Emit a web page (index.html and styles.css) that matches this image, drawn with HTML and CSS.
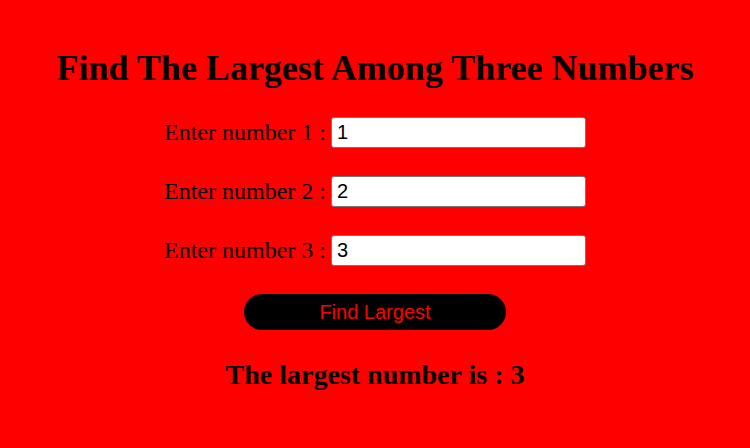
FILE: index.html
```html
<!DOCTYPE html>
<html>
<head>
<meta charset="utf-8">
<link rel="stylesheet" href="styles.css">
</head>
<body>
<div class="page">
  <h1 class="title">Find The Largest Among Three Numbers</h1>
  <div class="row"><label class="label">Enter number 1 :</label><input class="field" type="text" value="1"></div>
  <div class="row"><label class="label">Enter number 2 :</label><input class="field" type="text" value="2"></div>
  <div class="row"><label class="label">Enter number 3 :</label><input class="field" type="text" value="3"></div>
  <button class="btn">Find Largest</button>
  <h2 class="result">The largest number is : 3</h2>
</div>
</body>
</html>
```
FILE: styles.css
```css
html, body {
  margin: 0;
  padding: 0;
  background: #ff0000;
}
body {
  font-family: "Liberation Serif", "Times New Roman", serif;
  color: #000;
}
.page {
  display: flex;
  flex-direction: column;
  align-items: center;
  padding-top: 47px;
}
.title {
  font-size: 36px;
  font-weight: bold;
  margin: 0 0 28px 0;
  line-height: 42px;
}
.row {
  display: flex;
  align-items: center;
  gap: 5px;
  margin-bottom: 28px;
}
.label {
  font-size: 24px;
}
.field {
  box-sizing: border-box;
  width: 255px;
  height: 31px;
  border: 1px solid #767676;
  border-radius: 3px;
  background: #fff;
  font-family: "Liberation Sans", Arial, sans-serif;
  font-size: 20px;
  padding: 1px 5px;
  color: #000;
}
.btn {
  width: 262px;
  height: 36px;
  border: none;
  border-radius: 18px;
  background: #000;
  color: #ff0000;
  font-family: "Liberation Sans", Arial, sans-serif;
  font-size: 20px;
  margin-top: 0;
}
.result {
  font-size: 28px;
  font-weight: bold;
  margin: 29px 0 0 0;
}
```
